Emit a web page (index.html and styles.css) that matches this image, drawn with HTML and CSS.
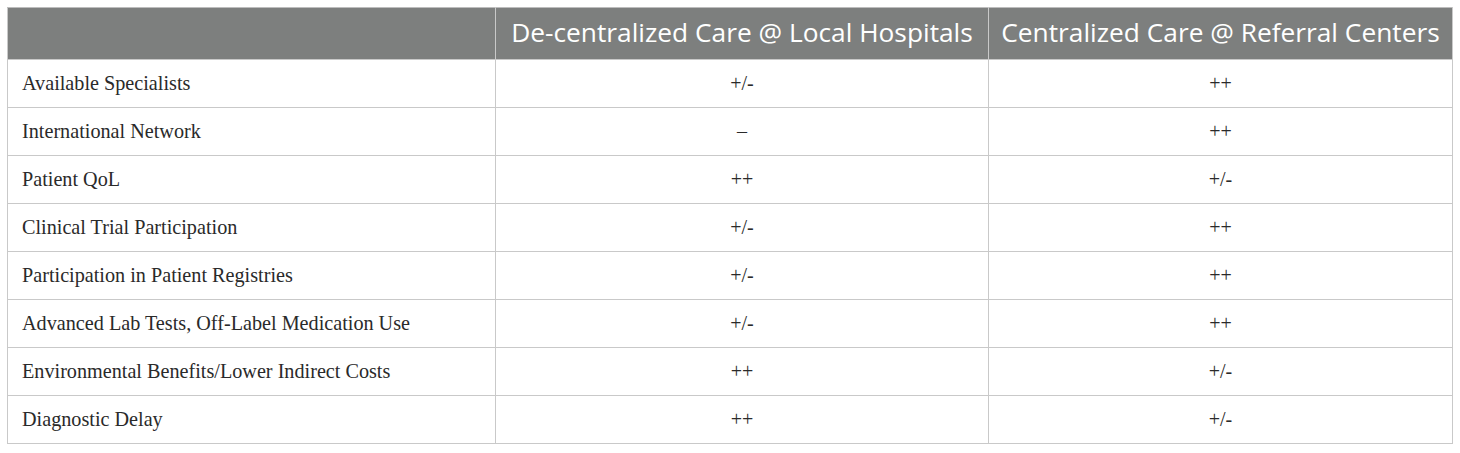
FILE: index.html
```html
<!DOCTYPE html>
<html>
<head>
<meta charset="utf-8">
<link rel="stylesheet" href="styles.css">
</head>
<body>
<table class="cmp">
  <colgroup>
    <col class="c1"><col class="c2"><col class="c3">
  </colgroup>
  <thead>
    <tr><th></th><th>De-centralized Care @ Local Hospitals</th><th>Centralized Care @ Referral Centers</th></tr>
  </thead>
  <tbody>
    <tr><td>Available Specialists</td><td class="v">+/-</td><td class="v">++</td></tr>
    <tr><td>International Network</td><td class="v">–</td><td class="v">++</td></tr>
    <tr><td>Patient QoL</td><td class="v">++</td><td class="v">+/-</td></tr>
    <tr><td>Clinical Trial Participation</td><td class="v">+/-</td><td class="v">++</td></tr>
    <tr><td>Participation in Patient Registries</td><td class="v">+/-</td><td class="v">++</td></tr>
    <tr><td>Advanced Lab Tests, Off-Label Medication Use</td><td class="v">+/-</td><td class="v">++</td></tr>
    <tr><td>Environmental Benefits/Lower Indirect Costs</td><td class="v">++</td><td class="v">+/-</td></tr>
    <tr><td>Diagnostic Delay</td><td class="v">++</td><td class="v">+/-</td></tr>
  </tbody>
</table>
</body>
</html>
```
FILE: styles.css
```css
html, body { margin: 0; padding: 0; background: #fff; }
body { padding: 7px 0 0 7px; }
.cmp {
  border-collapse: collapse;
  width: 1445px;
  table-layout: fixed;
  font-family: "Liberation Serif", serif;
  color: #2a2a2a;
}
.c1 { width: 488px; }
.c2 { width: 493px; }
.c3 { width: 464px; }
.cmp th {
  background: #7d7f7e;
  color: #fff;
  font-family: "Open Sans", sans-serif;
  font-weight: 400;
  font-size: 26.3px;
  line-height: 1;
  height: 49px;
  padding: 0 0 2px;
  border: 1px solid #c9c9c9;
  border-top-color: #bdbdbd;
  text-align: center;
  white-space: nowrap;
}
.cmp td {
  height: 47px;
  padding: 0 0 0 14px;
  border: 1px solid #c9c9c9;
  font-size: 20.2px;
  vertical-align: middle;
}
.cmp td.v { text-align: center; padding: 0; font-size: 20px; }
```
